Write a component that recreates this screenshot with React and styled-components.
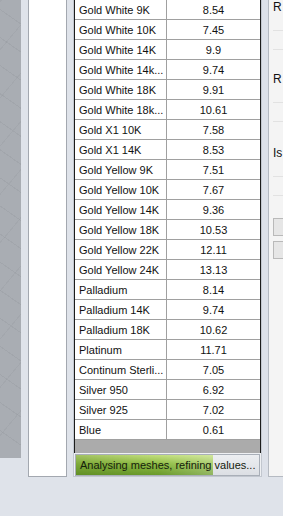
import styled, { createGlobalStyle } from "styled-components";

const GlobalStyle = createGlobalStyle`
    html, body {
        margin: 0;
        padding: 0;
        background: #dfe3ea;
        overflow: hidden;
    }
    body {
        font-family: "Liberation Sans", Arial, sans-serif;
    }
`

const rows = [
    ["Gold White 9K", "8.54"],
    ["Gold White 10K", "7.45"],
    ["Gold White 14K", "9.9"],
    ["Gold White 14k...", "9.74"],
    ["Gold White 18K", "9.91"],
    ["Gold White 18k...", "10.61"],
    ["Gold X1 10K", "7.58"],
    ["Gold X1 14K", "8.53"],
    ["Gold Yellow 9K", "7.51"],
    ["Gold Yellow 10K", "7.67"],
    ["Gold Yellow 14K", "9.36"],
    ["Gold Yellow 18K", "10.53"],
    ["Gold Yellow 22K", "12.11"],
    ["Gold Yellow 24K", "13.13"],
    ["Palladium", "8.14"],
    ["Palladium 14K", "9.74"],
    ["Palladium 18K", "10.62"],
    ["Platinum", "11.71"],
    ["Continum Sterli...", "7.05"],
    ["Silver 950", "6.92"],
    ["Silver 925", "7.02"],
    ["Blue", "0.61"],
]

const Screen = styled.div`
    display: flex;
    align-items: flex-start;
    width: 283px;
    height: 516px;
    background: #dfe3ea;
`
const Viewport = styled.div`
    width: 21px;
    height: 458px;
    flex-shrink: 0;
    background:
        repeating-linear-gradient(35deg, transparent 0 22px, rgba(140,144,150,0.25) 22px 23px),
        repeating-linear-gradient(-50deg, transparent 0 30px, rgba(140,144,150,0.2) 30px 31px),
        #a9adb3;
`
const SidePanel = styled.div`
    width: 37px;
    height: 476px;
    margin-left: 7px;
    flex-shrink: 0;
    background: #ffffff;
    border: 1px solid #a3a8b0;
    border-top: none;
`
const GridPanel = styled.div`
    display: flex;
    flex-direction: column;
    width: 187px;
    height: 476px;
    margin-left: 6px;
    flex-shrink: 0;
    border: 1px solid #c2c7cf;
    border-top: none;
    background: #eef0f3;
`
const Grid = styled.div`
    display: flex;
    flex-direction: column;
    height: 454px;
    background: #ababab;
    border-left: 1px solid #1c1c1c;
    border-right: 1px solid #1c1c1c;
`
const Row = styled.div`
    display: grid;
    grid-template-columns: 92px 1fr;
    height: 19px;
    background: #ffffff;
    border-bottom: 1px solid #a0a0a0;
    font-size: 11px;
    color: #111;
`
const NameCell = styled.div`
    display: flex;
    align-items: center;
    padding-left: 4px;
    border-right: 1px solid #a0a0a0;
    white-space: nowrap;
    overflow: hidden;
`
const ValueCell = styled.div`
    display: flex;
    align-items: center;
    justify-content: center;
`
const StatusBar = styled.div`
    position: relative;
    height: 20px;
    margin: 1px 1px 0 1px;
    border: 1px solid #a9afb8;
    background: linear-gradient(#eceef1, #dcdfe4);
    overflow: hidden;
`
const Progress = styled.div`
    height: 100%;
    background:
        linear-gradient(90deg, rgba(70,110,20,0.25), rgba(0,0,0,0) 60%, rgba(255,255,255,0.25)),
        linear-gradient(#c3df7e, #8fbd44 45%, #6a9a2c);
`
const StatusText = styled.span`
    position: absolute;
    left: 4px;
    top: 0;
    line-height: 20px;
    font-size: 11px;
    color: #15200c;
    white-space: nowrap;
`
const Splitter = styled.div`
    width: 6px;
    height: 477px;
    flex-shrink: 0;
    background: #dde1e9;
`
const RightPanel = styled.div`
    display: flex;
    flex-direction: column;
    width: 20px;
    height: 476px;
    flex-shrink: 0;
    background: #f4f4f4;
    border: 1px solid #b5bac2;
    border-top: none;
    padding-left: 4px;
    font-size: 12px;
    color: #111;
`
const Label = styled.div`
    height: 14px;
    line-height: 14px;
    margin-top: ${(p) => p.$top}px;
`
const Field = styled.div`
    height: 18px;
    margin-top: ${(p) => p.$top}px;
    border-top: 1px solid #e2e2e2;
`
const SideButton = styled.div`
    height: 16px;
    margin-top: ${(p) => p.$top}px;
    border: 1px solid #b9b9b9;
    border-right: none;
    background: #e6e6e6;
`

const App = () => {
    return (
        <Screen>
            <GlobalStyle />
            <Viewport />
            <SidePanel />
            <GridPanel>
                <Grid>
                    {rows.map(([name, value]) => (
                        <Row key={name}>
                            <NameCell>{name}</NameCell>
                            <ValueCell>{value}</ValueCell>
                        </Row>
                    ))}
                </Grid>
                <StatusBar>
                    <Progress style={{ width: "75%" }} />
                    <StatusText>Analysing meshes, refining values...</StatusText>
                </StatusBar>
            </GridPanel>
            <Splitter />
            <RightPanel>
                <Label $top={0}>R</Label>
                <Field $top={16} />
                <Field $top={0} />
                <Label $top={4}>R</Label>
                <Field $top={16} />
                <Field $top={0} />
                <Label $top={6}>Is</Label>
                <Field $top={16} />
                <Field $top={0} />
                <SideButton $top={4} />
                <SideButton $top={5} />
            </RightPanel>
        </Screen>
    )
}

export default App;
